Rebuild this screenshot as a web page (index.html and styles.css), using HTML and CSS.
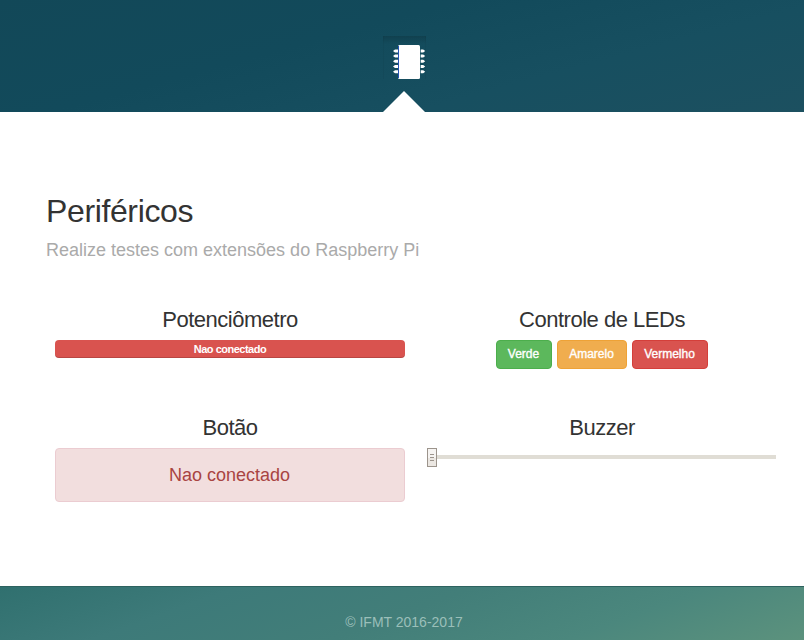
FILE: index.html
```html
<!DOCTYPE html>
<html lang="pt-BR">
<head>
<meta charset="utf-8">
<title>Periféricos</title>
<link rel="stylesheet" href="styles.css">
</head>
<body>
<header class="top">
  <div class="chip">
    <svg width="43" height="43" viewBox="0 0 43 43" fill="#fff">
      <rect x="15" y="9" width="22" height="34" rx="1.5"/>
      <path d="M15.5 10v32" stroke="#2453b5" stroke-width="1"/>
      <path d="M15 13.5h-3l-2 1.5 2 1.5h3zM15 18.5h-3l-2 1.5 2 1.5h3zM15 23.7h-3l-2 1.5 2 1.5h3zM15 29h-3l-2 1.5 2 1.5h3zM15 34.2h-3l-2 1.5 2 1.5h3z"/>
      <path d="M37.7 13.5h2.5l2 1.5-2 1.5h-2.5zM37.7 18.5h2.5l2 1.5-2 1.5h-2.5zM37.7 23.7h2.5l2 1.5-2 1.5h-2.5zM37.7 29h2.5l2 1.5-2 1.5h-2.5zM37.7 34.2h2.5l2 1.5-2 1.5h-2.5z"/>
    </svg>
  </div>
  <div class="arrow"></div>
</header>
<main class="content">
  <h1 class="title">Periféricos</h1>
  <p class="lead">Realize testes com extensões do Raspberry Pi</p>
  <div class="grid">
    <section>
      <h2 class="name">Potenciômetro</h2>
      <div class="bar">Nao conectado</div>
    </section>
    <section>
      <h2 class="name">Controle de LEDs</h2>
      <div class="buttons">
        <button class="btn green">Verde</button>
        <button class="btn amber">Amarelo</button>
        <button class="btn red">Vermelho</button>
      </div>
    </section>
    <section>
      <h2 class="name">Botão</h2>
      <div class="alert">Nao conectado</div>
    </section>
    <section>
      <h2 class="name">Buzzer</h2>
      <div class="slider"><span class="thumb"><i></i><i></i><i></i></span><span class="track"></span></div>
    </section>
  </div>
</main>
<footer class="footer">© IFMT 2016-2017</footer>
</body>
</html>
```
FILE: styles.css
```css
* { box-sizing: border-box; }
body { margin: 0; height: 640px; overflow: hidden; display: flex; flex-direction: column; background: #fff; color: #333; font-family: "Liberation Sans", Arial, sans-serif; }
.top { height: 112px; padding: 36px 0 0 4px; display: flex; flex-direction: column; align-items: center; background: linear-gradient(165deg, #124858 0%, #124a5b 38%, #174f60 68%, #1c5060 100%); }
.chip { width: 43px; height: 43px; flex: none; background: linear-gradient(rgba(0,0,0,.15), rgba(0,0,0,0) 8px); box-shadow: inset 1px 0 rgba(0,0,0,.04), inset -1px 0 rgba(0,0,0,.04); }
.chip svg { display: block; }
.arrow { width: 42px; height: 21px; margin-top: 12px; background: #fff; clip-path: polygon(50% 0, 100% 100%, 0 100%); }
.content { height: 474px; padding: 81px 27px 0 46px; }
.title { margin: 0; font-size: 32px; line-height: 36px; font-weight: 400; letter-spacing: -.37px; }
.lead { margin: 11px 0 0; font-size: 18px; line-height: 20px; color: #aaa; }
.grid { display: grid; grid-template-columns: 350px 350px; column-gap: 22px; grid-template-rows: 108px 90px; margin: 47px 0 0 9px; text-align: center; }
.name { margin: 0; padding-bottom: 8px; font-size: 22px; line-height: 25px; font-weight: 400; letter-spacing: -.48px; }
.bar { height: 18px; border-radius: 4px; background: #d9534f; box-shadow: inset 0 -1px rgba(0,0,0,.15); color: #fff; font-size: 11px; line-height: 19px; font-weight: 700; letter-spacing: -.5px; }
.buttons { display: flex; justify-content: center; gap: 5px; }
.btn { height: 29px; padding: 0 1px 2px 0; border: 1px solid; border-radius: 4px; color: #fff; font: 12px "Liberation Sans", Arial, sans-serif; -webkit-text-stroke: .35px #fff; }
.green { width: 56px; background: #5cb85c; border-color: #4cae4c; }
.amber { width: 70px; background: #f0ad4e; border-color: #eea236; }
.red { width: 76px; background: #d9534f; border-color: #d43f3a; }
.alert { height: 54px; padding-right: 1px; border: 1px solid #ebccd1; border-radius: 4px; background: #f2dede; color: #a94442; font-size: 18px; line-height: 52px; }
.slider { display: flex; width: 349px; height: 19px; }
.thumb { width: 10px; height: 19px; border: 1px solid #9c948c; background: linear-gradient(#f6f4f2 50%, #ebe7e2 50%); display: flex; flex-direction: column; align-items: center; justify-content: center; gap: 2px; }
.thumb i { width: 4px; height: 1px; background: #9c948c; }
.track { flex: 1; height: 4px; margin-top: 7px; background: #e0ddd5; }
.footer { height: 54px; padding: 27px 0 0 4px; border-top: 1px solid #2d625f; background: linear-gradient(160deg, #30706f 0%, #3d7a79 25%, #427e79 50%, #4b877d 75%, #5c927d 100%); color: #9bbfb9; font-size: 14px; line-height: 16px; text-align: center; }
```
